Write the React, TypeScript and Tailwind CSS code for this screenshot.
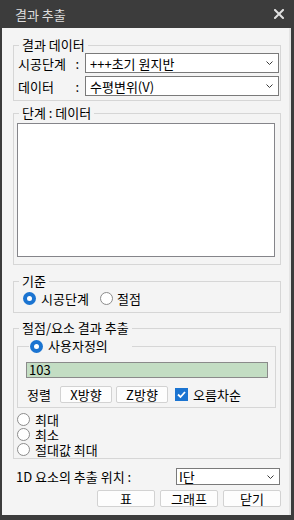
import React from "react";

function Radio({ checked }: { checked?: boolean }) {
  if (checked) {
    return (
      <span className="w-[13px] h-[13px] rounded-full bg-[#1b74d1] flex items-center justify-center shrink-0">
        <span className="w-[5px] h-[5px] rounded-full bg-white" />
      </span>
    );
  }
  return <span className="w-[13px] h-[13px] rounded-full bg-white border border-[#8c8c8c] shrink-0" />;
}

function Chevron() {
  return (
    <svg width="7" height="4" viewBox="0 0 7 4" className="shrink-0">
      <polyline points="0.5,0.5 3.5,3.5 6.5,0.5" fill="none" stroke="#3a3a3a" strokeWidth="1" />
    </svg>
  );
}

function Combo({ text, className }: { text: string; className: string }) {
  return (
    <div
      className={
        "bg-white border border-[#7a7a7a] flex items-center justify-between pr-[5px] leading-[15px] " +
        className
      }
    >
      <span>{text}</span>
      <Chevron />
    </div>
  );
}

function Btn({ text, className }: { text: string; className: string }) {
  return (
    <div
      className={
        "bg-[#fdfdfd] border border-[#d2d2d2] rounded-[2px] flex items-center justify-center leading-[15px] " +
        className
      }
    >
      {text}
    </div>
  );
}

export default function App() {
  return (
    <div className="w-[294px] h-[520px] bg-[#3c3c3c] flex flex-col font-['Noto_Sans_CJK_KR','Noto_Sans',sans-serif] text-[13px] text-black">
      {/* Title bar */}
      <div className="h-[28px] shrink-0 flex items-center justify-between pl-[15px] pr-[10px]">
        <span className="text-[#dedede] text-[13px] leading-[15px]">결과 추출</span>
        <svg width="10" height="10" viewBox="0 0 10 10">
          <path d="M1 1 L9 9 M9 1 L1 9" stroke="#e0e0e0" strokeWidth="2" strokeLinecap="square" />
        </svg>
      </div>

      {/* Client */}
      <div className="flex-1 ml-[2px] mr-[3px] mb-[5px] bg-[#f4f4f4] border-r-[2px] border-[#e4e4e4] pl-[11px] pt-[10px] flex flex-col">
        {/* Group 1 */}
        <fieldset className="border border-[#d6d6d6] w-[268px]">
          <legend className="ml-[5px] px-[3px] leading-[14px]">결과 데이터</legend>
          <div className="pl-[4px] pr-[1px] pt-[1px] pb-[4px] flex flex-col gap-[3px]">
            <div className="flex items-center h-[20px]">
              <div className="w-[67px] flex justify-between pr-[6px] leading-[15px]">
                <span>시공단계</span>
                <span>:</span>
              </div>
              <Combo text="+++초기 원지반" className="flex-1 h-[20px] pl-[4px]" />
            </div>
            <div className="flex items-center h-[20px]">
              <div className="w-[67px] flex justify-between pr-[6px] leading-[15px]">
                <span>데이터</span>
                <span>:</span>
              </div>
              <Combo text="수평변위(V)" className="flex-1 h-[20px] pl-[4px]" />
            </div>
          </div>
        </fieldset>

        {/* Group 2 */}
        <fieldset className="border border-[#d6d6d6] w-[268px] mt-[5px]">
          <legend className="ml-[5px] px-[3px] leading-[14px]">단계 : 데이터</legend>
          <div className="pl-[3px] pt-[3px] pb-[7px]">
            <div className="w-[258px] h-[134px] bg-white border border-[#85858a]" />
          </div>
        </fieldset>

        {/* Group 3 */}
        <fieldset className="border border-[#d6d6d6] w-[268px] mt-[9px]">
          <legend className="ml-[5px] px-[3px] leading-[14px]">기준</legend>
          <div className="pl-[9px] pt-[4px] pb-[7px] flex items-center">
            <div className="w-[77px] h-[13px] flex items-center gap-[5px] leading-[13px]">
              <Radio checked />
              <span>시공단계</span>
            </div>
            <div className="h-[13px] flex items-center gap-[4px] leading-[13px]">
              <Radio />
              <span>절점</span>
            </div>
          </div>
        </fieldset>

        {/* Group 4 */}
        <fieldset className="border border-[#d6d6d6] w-[268px] mt-[8px]">
          <legend className="ml-[5px] px-[3px] leading-[14px]">절점/요소 결과 추출</legend>
          <div className="pl-[3px] pt-[4px] pb-[1px] flex flex-col">
            <fieldset className="border border-[#d6d6d6] w-[259px]">
              <legend className="ml-[11px] px-[1px] w-[103px] h-[14px]">
                <span className="flex items-center gap-[5px] h-[14px] leading-[14px]">
                  <Radio checked />
                  <span>사용자정의</span>
                </span>
              </legend>
              <div className="pl-[8px] pt-[9px] pb-[4px] flex flex-col">
                <div className="w-[242px] h-[16px] bg-[#c3ddc3] border border-[#8a8a8a] pl-[2px] flex items-center leading-[14px]">
                  103
                </div>
                <div className="mt-[8px] h-[17px] flex items-center">
                  <span className="w-[34px] pl-[1px] leading-[15px]">정렬</span>
                  <Btn text="X방향" className="w-[52px] h-[17px]" />
                  <Btn text="Z방향" className="w-[52px] h-[17px] ml-[4px]" />
                  <span className="ml-[7px] w-[13px] h-[13px] bg-[#1b74d1] flex items-center justify-center shrink-0">
                    <svg width="11" height="11" viewBox="0 0 11 11">
                      <polyline points="2,5.5 4.5,8 9,3" fill="none" stroke="white" strokeWidth="1.8" />
                    </svg>
                  </span>
                  <span className="ml-[5px] leading-[15px]">오름차순</span>
                </div>
              </div>
            </fieldset>
            <div className="mt-[4px] flex flex-col">
              <div className="h-[15px] flex items-center gap-[5px] leading-[13px]">
                <Radio />
                <span>최대</span>
              </div>
              <div className="h-[15px] flex items-center gap-[5px] leading-[13px]">
                <Radio />
                <span>최소</span>
              </div>
              <div className="h-[15px] flex items-center gap-[5px] leading-[13px]">
                <Radio />
                <span>절대값 최대</span>
              </div>
            </div>
          </div>
        </fieldset>

        {/* 1D row */}
        <div className="mt-[9px] w-[268px] h-[17px] flex items-center justify-between pl-[3px] pr-[1px]">
          <span className="leading-[15px]">1D 요소의 추출 위치 :</span>
          <Combo text="I단" className="w-[104px] h-[17px] pl-[2px]" />
        </div>

        {/* Buttons */}
        <div className="mt-[5px] w-[268px] flex justify-end gap-[5px]">
          <Btn text="표" className="w-[58px] h-[17px]" />
          <Btn text="그래프" className="w-[58px] h-[17px]" />
          <Btn text="닫기" className="w-[58px] h-[17px]" />
        </div>
      </div>
    </div>
  );
}
